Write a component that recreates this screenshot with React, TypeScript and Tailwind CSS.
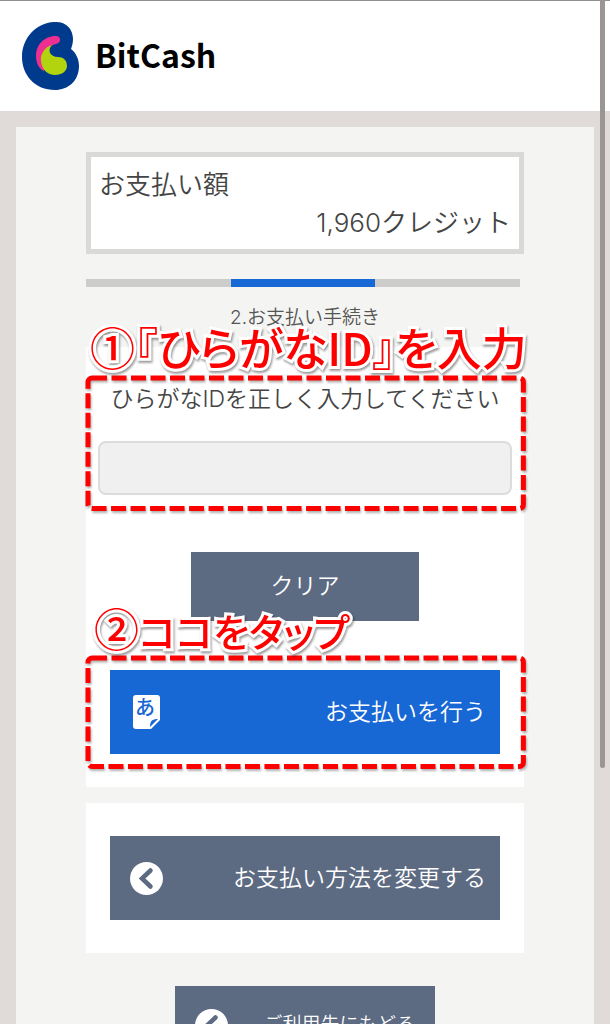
import React from 'react';

const LogoMark: React.FC = () => (
  <svg width="58" height="70" viewBox="0 0 58 70" aria-hidden="true">
    <path
      d="M33 1 C45 0 52 8 52 18 C52 22 51 25 50 28 C55 32 58 38 58 45 C58 60 47 69 34 69 C14 69 1 54 1 36 C1 17 15 2 33 1 Z"
      fill="#003a8c"
    />
    <path
      d="M35 15 C23 15 15 24 15 35 C15 42 18 48 23 50 L24 34 C25 27 30 24 35 23 C41 22 40 15 35 15 Z"
      fill="#ee2f92"
    />
    <path
      d="M31 24 C24 26 19 33 20 40 C21 49 27 54 34 54 C41 54 46 50 46 45 C46 39 42 36 37 36 C29 36 26 29 31 24 Z"
      fill="#b2d40e"
    />
  </svg>
);

const KanaPageIcon: React.FC = () => (
  <svg width="27" height="34" viewBox="0 0 27 34" aria-hidden="true">
    <path d="M3 0 H24 Q27 0 27 3 V25 L18 34 H3 Q0 34 0 31 V3 Q0 0 3 0 Z" fill="#fff" />
    <path d="M17 32 C17 26 19 24 25 24 Z" fill="#1768d5" />
    <text x="12" y="20" textAnchor="middle" fontSize="20" fontWeight="500" fill="#1768d5">
      あ
    </text>
  </svg>
);

const BackIcon: React.FC = () => (
  <svg width="33" height="33" viewBox="0 0 33 33" aria-hidden="true">
    <circle cx="16.5" cy="16.5" r="16.5" fill="#fff" />
    <path d="M20.500 8.500 L12 16.500 L20.500 24.500" fill="none" stroke="#5c6a82" strokeWidth="4.500" strokeLinecap="round" />
  </svg>
);

// Dashed frame laid over the area that the reader should look at
const Frame: React.FC<{ className: string }> = ({ className }) => (
  <svg
    className={`pointer-events-none absolute inset-x-0 w-full overflow-visible drop-shadow-[1px_2px_1px_rgba(0,0,0,0.3)] ${className}`}
    aria-hidden="true"
  >
    <rect
      x="2"
      y="2"
      width="99.4%"
      height="96%"
      rx="4"
      fill="none"
      stroke="#f00"
      strokeWidth="5"
      strokeDasharray="15 4.5"
    />
  </svg>
);

const Note: React.FC<{ className: string; children: React.ReactNode }> = ({ className, children }) => (
  <p
    className={`pointer-events-none absolute z-10 whitespace-nowrap text-[45px] leading-[52px] font-medium text-[#f00] [font-feature-settings:'palt'] [paint-order:stroke_fill] [-webkit-text-stroke:6px_white] drop-shadow-[1px_2px_1px_rgba(0,0,0,0.4)] font-['Noto_Sans_CJK_JP',sans-serif] ${className}`}
  >
    {children}
  </p>
);

const App: React.FC = () => {
  return (
    <div className="relative h-screen overflow-hidden bg-[#e0dbd9] font-['Inter','Noto_Sans_CJK_JP',sans-serif] font-[350] text-[#444]">
      <div className="h-full overflow-y-auto [scrollbar-width:none]">
        <header className="flex h-[111px] items-center gap-4 border-t border-[#8f8f8f] bg-white px-[21px]">
          <LogoMark />
          <span className="pb-1 text-[32px] leading-10 font-bold text-black font-['Noto_Sans_CJK_JP',sans-serif]">
            BitCash
          </span>
        </header>

        <main className="p-4">
          <div className="bg-[#f4f4f2] px-[70px] pt-[25px] pb-8">
            {/* Amount */}
            <section className="border-5 border-[#d9d9d8] bg-white px-2 pt-[9px] pb-[7px] text-[26px] leading-[38px]">
              <h2 className="font-[350]">お支払い額</h2>
              <p className="text-right">1,960クレジット</p>
            </section>

            {/* Steps */}
            <div className="mt-[25px] mr-1 grid h-2 grid-cols-3 bg-[#cccccb]">
              <div className="col-start-2 bg-[#1768d5]"></div>
            </div>
            <p className="mt-[17px] text-center text-[19px] leading-7 text-[#555]">2.お支払い手続き</p>

            {/* ID entry */}
            <form className="relative mt-[15px] bg-white px-3 pt-9 pb-[33px]" onSubmit={(e) => e.preventDefault()}>
              <label htmlFor="hiragana-id" className="block text-center text-[23px] leading-8">
                ひらがなIDを正しく入力してください
              </label>
              <input
                id="hiragana-id"
                type="text"
                className="mt-[26px] block h-[54px] w-full rounded-lg border-2 border-[#dcdcdc] bg-[#f0f0f0] px-3 text-[23px]"
              />
              <button
                type="reset"
                className="mx-auto mt-[57px] block h-[69px] w-[228px] bg-[#5c6a82] text-[23px] text-white"
              >
                クリア
              </button>
              <div className="mt-[49px] px-3">
                <button
                  type="submit"
                  className="flex h-[84px] w-full items-center justify-between bg-[#1768d5] pr-[14px] pl-[23px] text-[23px] text-white"
                >
                  <KanaPageIcon />
                  お支払いを行う
                </button>
              </div>

              <Note className="-top-[26px] left-1">①『ひらがなID』を入力</Note>
              <Frame className="top-[29px] h-[136px]" />
              <Note className="top-[255px] left-2">
                ②<span className="text-[39px]">ココをタップ</span>
              </Note>
              <Frame className="top-[309px] h-[113px]" />
            </form>

            <section className="mt-4 bg-white px-6 py-[33px]">
              <button
                type="button"
                className="flex h-[84px] w-full items-center justify-between bg-[#5c6a82] pr-[14px] pl-5 text-[23px] text-white"
              >
                <BackIcon />
                お支払い方法を変更する
              </button>
            </section>

            <button
              type="button"
              className="mx-auto mt-[33px] flex h-[78px] w-[260px] items-center justify-between bg-[#5c6a82] px-5 text-[19px] text-white"
            >
              <BackIcon />
              ご利用先にもどる
            </button>
          </div>
        </main>
      </div>

      {/* Scroll position */}
      <div className="absolute top-0 right-[5px] h-3/4 w-[5px] rounded-b-full bg-[#9b9694]"></div>
    </div>
  );
};

export default App;
